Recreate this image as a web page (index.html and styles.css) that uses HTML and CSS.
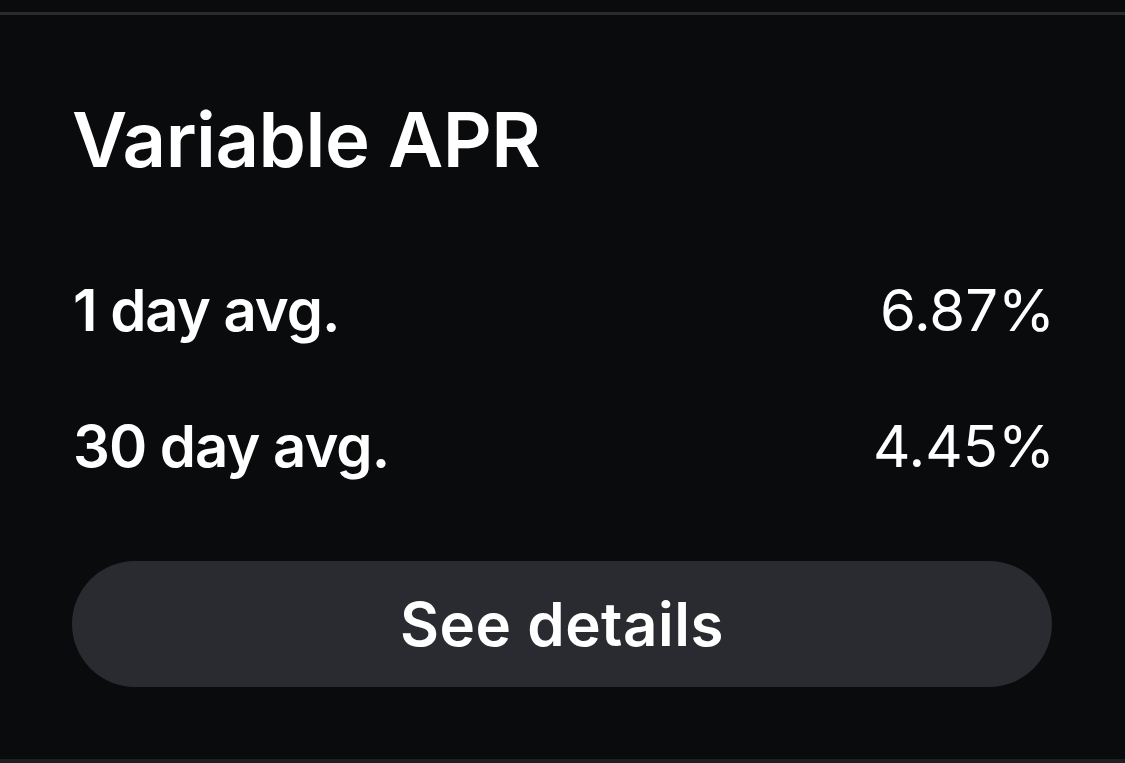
FILE: index.html
```html
<!DOCTYPE html>
<html lang="en">
<head>
<meta charset="utf-8">
<link rel="stylesheet" href="styles.css">
</head>
<body>
<div class="rule rule-top"></div>
<section class="card">
  <h1 class="title">Variable APR</h1>
  <div class="row row-first">
    <span class="label">1 day avg.</span>
    <span class="value">6.87%</span>
  </div>
  <div class="row row-second">
    <span class="label">30 day avg.</span>
    <span class="value">4.45%</span>
  </div>
  <button class="details-btn">See details</button>
</section>
<div class="rule rule-bottom"></div>
</body>
</html>
```
FILE: styles.css
```css
html, body {
  margin: 0;
  padding: 0;
  background: #0a0b0d;
  height: 763px;
  overflow: hidden;
}
body {
  font-family: Inter, "Noto Sans", sans-serif;
  color: #ffffff;
  display: flex;
  flex-direction: column;
}
.rule {
  height: 3px;
  background: #2a2b2f;
}
.rule-top {
  margin-top: 12px;
}
.rule-bottom {
  margin-top: auto;
  height: 4px;
  background: #1e1f23;
}
.card {
  display: flex;
  flex-direction: column;
  padding: 0 73px 0 72px;
}
.title {
  margin: 86px 0 0 0;
  font-size: 76px;
  font-weight: 600;
  line-height: 1;
  letter-spacing: -0.5px;
}
.row {
  display: flex;
  justify-content: space-between;
  align-items: baseline;
  font-size: 58px;
  line-height: 1;
  padding: 0 0 0 1px;
}
.row-first {
  margin-top: 104px;
}
.row-second {
  margin-top: 78px;
}
.label {
  font-weight: 600;
  letter-spacing: -1px;
}
.value {
  font-weight: 400;
  margin-right: -3px;
}
.details-btn {
  margin-top: 86px;
  height: 126px;
  border: none;
  border-radius: 63px;
  background: #2a2b30;
  color: #ffffff;
  font-family: Inter, "Noto Sans", sans-serif;
  font-size: 60px;
  font-weight: 600;
  letter-spacing: 0.5px;
}
```
